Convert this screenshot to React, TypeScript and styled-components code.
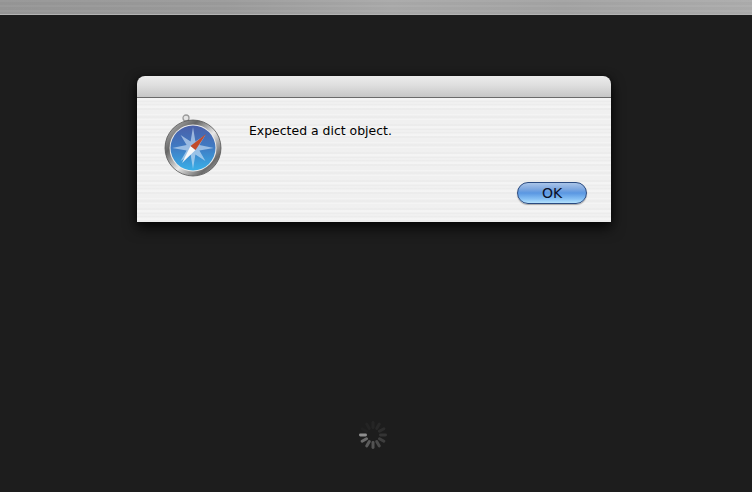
import React from "react";
import styled, { createGlobalStyle } from "styled-components";

const Global = createGlobalStyle`
  html, body { margin: 0; padding: 0; height: 100%; background: #1d1d1d; overflow: hidden; }
  #root { height: 100%; }
`;

const Page = styled.div`
  width: 752px;
  height: 492px;
  display: flex;
  flex-direction: column;
  align-items: flex-start;
  background: #1d1d1d;
`;

const TopBar = styled.div`
  width: 100%;
  height: 14px;
  flex: none;
  border-bottom: 1px solid #b4b4b4;
  background:
    repeating-linear-gradient(180deg, rgba(255,255,255,.025) 0 2px, rgba(0,0,0,.02) 2px 5px),
    linear-gradient(90deg, #979797 0%, #9c9c9c 30%, #aaaaaa 52%, #a4a4a4 75%, #adadad 100%);
`;

const Dialog = styled.div`
  width: 474px;
  height: 146px;
  margin: 61px 0 0 137px;
  flex: none;
  display: flex;
  flex-direction: column;
  border-radius: 8px 8px 0 0;
  overflow: hidden;
  box-shadow: 0 6px 14px rgba(0, 0, 0, 0.75), 0 1px 6px rgba(0,0,0,.5);
`;

const TitleBar = styled.div`
  height: 21px;
  flex: none;
  background: linear-gradient(180deg, #ececec 0%, #dedede 45%, #c6c6c6 100%);
  border-bottom: 1px solid #6a6a6a;
`;

const Body = styled.div`
  flex: 1;
  display: flex;
  padding: 15px 24px 18px 26px;
  background:
    repeating-linear-gradient(180deg, rgba(255,255,255,.14) 0 3px, rgba(0,0,0,.006) 3px 7px),
    repeating-linear-gradient(180deg, #f2f2f2 0 2px, #eeeeee 2px 4px);
`;

const IconSlot = styled.div`
  width: 60px;
  height: 66px;
  flex: none;
  margin-right: 26px;
`;

const Content = styled.div`
  flex: 1;
  display: flex;
  flex-direction: column;
  justify-content: space-between;
`;

const Message = styled.div`
  margin-top: 10px;
  font: 12.45px/15px "DejaVu Sans", sans-serif;
  color: #000;
`;

const Actions = styled.div`
  display: flex;
  justify-content: flex-end;
`;

const OkButton = styled.button`
  width: 70px;
  height: 22px;
  padding: 0;
  border: 1px solid #2a4a80;
  border-radius: 11px;
  font: 14px/18px "DejaVu Sans", sans-serif;
  color: #0a1028;
  background: linear-gradient(180deg, #a9c4e8 0%, #7fa8e0 30%, #5a97e2 50%, #86c0f4 80%, #b4e2fc 100%);
  box-shadow: 0 1px 1px rgba(0, 0, 0, 0.3);
`;

const SpinnerSlot = styled.div`
  width: 30px;
  height: 30px;
  margin: 198px 0 0 358px;
  flex: none;
`;

const Compass = () => (
  <svg width="60" height="66" viewBox="0 0 60 66">
    <defs>
      <linearGradient id="ring" x1="0" y1="0" x2="1" y2="1">
        <stop offset="0" stopColor="#c8c8c8" />
        <stop offset=".3" stopColor="#666" />
        <stop offset=".55" stopColor="#e8e8e8" />
        <stop offset=".8" stopColor="#6a6a6a" />
        <stop offset="1" stopColor="#d0d0d0" />
      </linearGradient>
      <linearGradient id="face" x1="0" y1="0" x2="0" y2="1">
        <stop offset="0" stopColor="#4a5fa8" />
        <stop offset=".5" stopColor="#3f7cc4" />
        <stop offset="1" stopColor="#39b0e8" />
      </linearGradient>
    </defs>
    <circle cx="23" cy="5" r="3" fill="#e4e4e4" stroke="#9a9a9a" strokeWidth="1.3" />
    <circle cx="30" cy="35" r="28" fill="url(#ring)" stroke="#555" strokeWidth=".8" />
    <circle cx="30" cy="35" r="23.5" fill="#ececec" />
    <circle cx="30" cy="35" r="22.5" fill="url(#face)" />
    <path
      d="M30 14l2.4 14.5 10-6.5-6 10 14.5 3-14.5 2.4 6 10.6-10-6.5L30 56l-2.4-14.5-10 6.5 6-10.6-14.5-2.4 14.5-3-6-10 10 6.5z"
      fill="#d6e8f8"
      opacity=".6"
    />
    <path d="M19 50 L27.5 33 L32.5 37z" fill="#f8f8f8" />
    <path d="M43 21 L27.5 33 L32.5 37z" fill="#c24a2a" />
  </svg>
);

const Spinner = () => (
  <svg width="30" height="30" viewBox="0 0 30 30">
    {[
      [270, 0.5], [240, 0.34], [210, 0.28], [180, 0.24], [150, 0.2], [120, 0.15],
      [90, 0.1], [60, 0.07], [30, 0.05], [0, 0.04], [330, 0.03], [300, 0.02],
    ].map(([a, o]) => (
      <rect key={a} x="13.5" y="1" width="3" height="8" rx="1.4" fill="#fff" opacity={o} transform={`rotate(${a} 15 15)`} />
    ))}
  </svg>
);

export default function App() {
  return (
    <>
      <Global />
      <Page>
        <TopBar />
        <Dialog>
          <TitleBar />
          <Body>
            <IconSlot><Compass /></IconSlot>
            <Content>
              <Message>Expected a dict object.</Message>
              <Actions><OkButton>OK</OkButton></Actions>
            </Content>
          </Body>
        </Dialog>
        <SpinnerSlot><Spinner /></SpinnerSlot>
      </Page>
    </>
  );
}
